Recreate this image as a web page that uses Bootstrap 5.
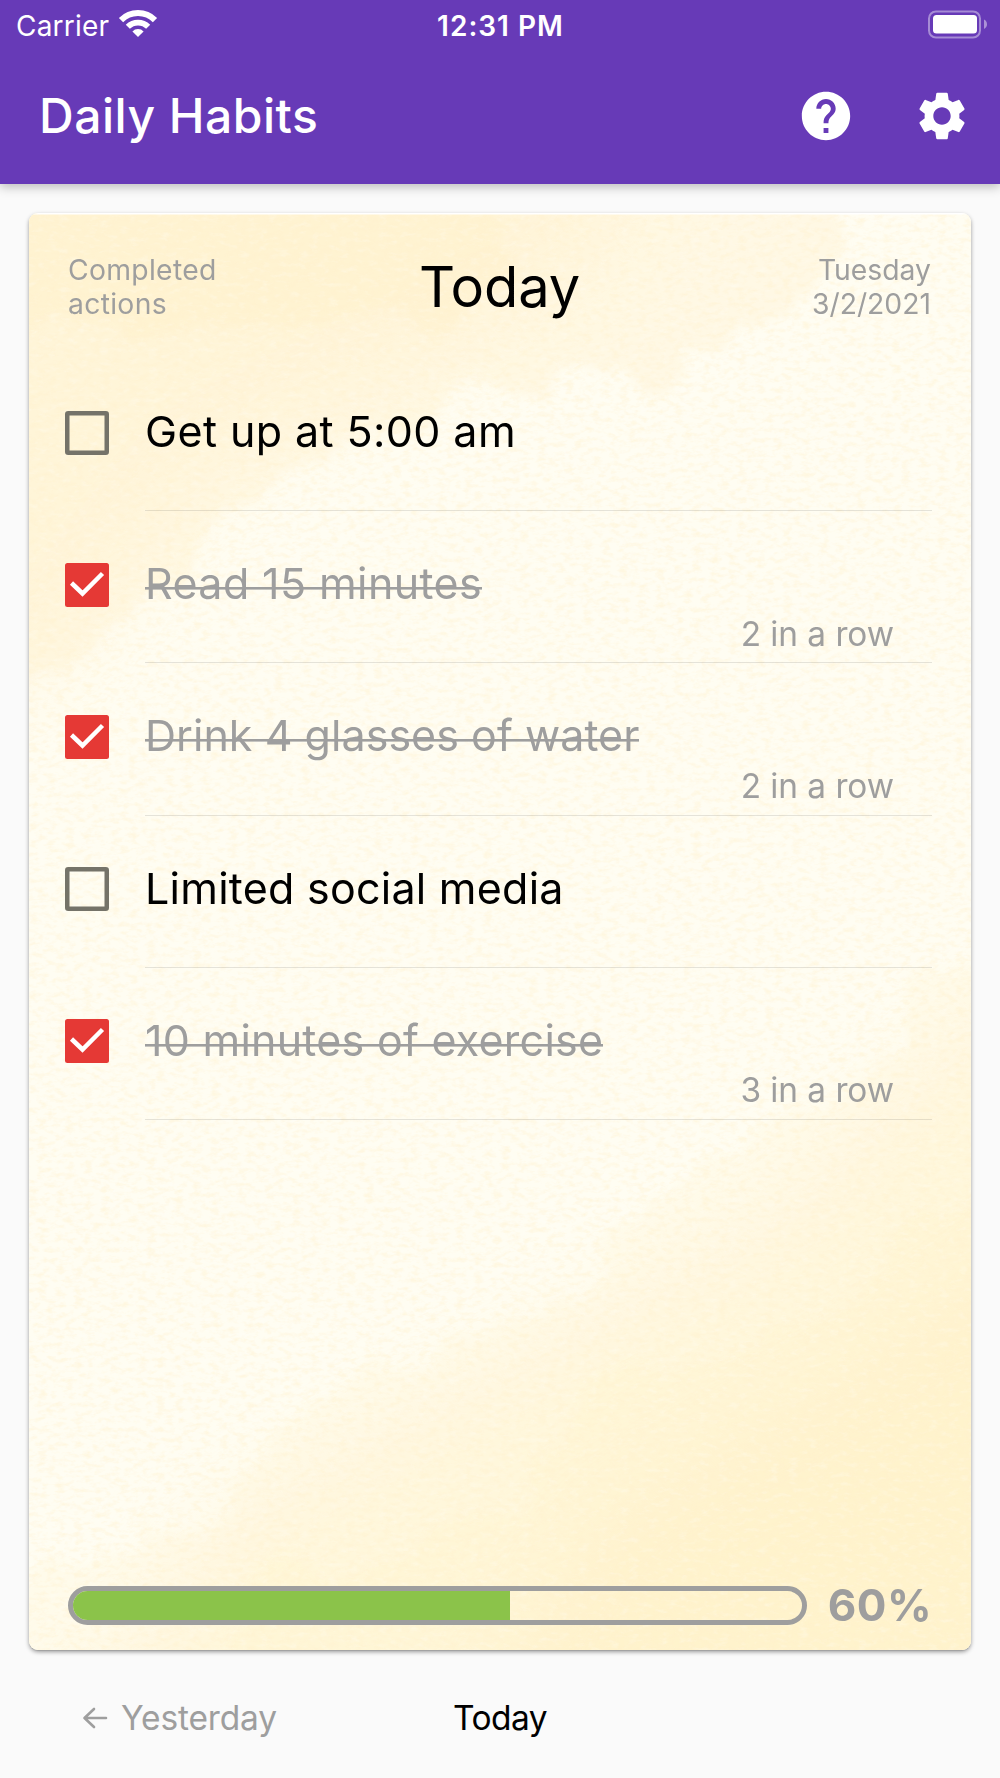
<!DOCTYPE html>
<html lang="en">
<head>
<meta charset="utf-8">
<meta name="viewport" content="width=device-width, initial-scale=1">
<title>Daily Habits</title>
<link href="https://cdn.jsdelivr.net/npm/bootstrap@5.3.0/dist/css/bootstrap.min.css" rel="stylesheet">
<style>
  body { font-family: Inter, "Liberation Sans", sans-serif; background: #fafafa; color: #000; }
  .screen { width: 1000px; height: 1778px; overflow: hidden; }
  .app-head { height: 184px; background: #673ab7; box-shadow: 0 3px 10px rgba(0,0,0,.25); z-index: 1; }
  .status-bar { height: 48px; padding: 3px 13px 0 16px; font-size: 28px; line-height: 46px; }
  .status-side { flex: 1 1 0; }
  .status-icon { margin-top: 6px; }
  .wifi { margin-left: 8px; }
  .carrier { letter-spacing: .2px; }
  .clock { letter-spacing: 1px; font-weight: 600; margin-right: 2px; }
  .title-bar { height: 136px; padding: 0 29px 0 39px; }
  .app-title { font-size: 48px; font-weight: 500; line-height: 60px; letter-spacing: .5px; }
  .actions { gap: 58px; }
  .paper { margin: 29px 29px 0; height: 1437px; border-radius: 9px; background: #fffcf0; border: 0;
    box-shadow: 0 2px 4px rgba(0,0,0,.38), 0 1px 1px rgba(0,0,0,.1); overflow: hidden; }
  .paper-content { position: relative; }
  .day-head { height: 146px; padding: 39.5px 40px 0 39px; color: #9e9e9e; font-size: 28.3px; line-height: 34px; }
  .day-side { flex: 1 1 0; }
  .day-side.first { letter-spacing: .3px; }
  .day-title { font-size: 56px; line-height: 69px; color: #000; font-weight: 400; letter-spacing: -.1px; }
  .habit { height: 152.2px; padding-left: 36px; padding-right: 39px; }
  .tick { width: 44px; height: 44px; margin: 51.6px 36px 0 0; }
  .habit-body { border-bottom: 1px solid rgba(0,0,0,.1); padding-top: 46px; }
  .habit-name { font-size: 43px; line-height: 52px; letter-spacing: .25px; }
  .done .habit-name { color: #9e9e9e; background: linear-gradient(#9e9e9e, #9e9e9e) 0 30px / 100% 2.6px no-repeat; width: fit-content; }
  .habit-name.ls-wide { letter-spacing: .4px; }
  .habit-name.ls-tight { letter-spacing: .04px; }
  .streak { font-size: 33.4px; line-height: 40px; color: #9e9e9e; margin-top: 4.5px; padding-right: 38px; letter-spacing: -.05px; }
  .meter-row { padding: 0 39px 25px 39px; }
  .meter { width: 739px; height: 39px; border: 5px solid #9e9e9e; border-radius: 20px; background: transparent; }
  .meter .progress-bar { background: #8bc34a; }
  .percent { font-size: 44px; font-weight: 700; line-height: 39px; letter-spacing: .4px; color: #9e9e9e; }
  .pager { height: 128px; padding: 48px 82px 0; font-size: 33.5px; line-height: 40px; letter-spacing: -.15px; }
  .pager-side { flex: 1 1 0; color: #9e9e9e; }
  .pager-now { letter-spacing: -.5px; }
  .pager-arrow { margin: 8px 13px 0 0; }
</style>
</head>
<body>
<div class="screen d-flex flex-column">
  <header class="app-head position-relative text-white">
    <div class="status-bar d-flex align-items-start">
      <div class="status-side d-flex">
        <span class="carrier">Carrier</span>
        <svg class="status-icon wifi" width="42" height="30" viewBox="0 0 42 30" fill="none" stroke="#fff">
          <path d="M4.03 11.03A24 24 0 0 1 37.97 11.03" stroke-width="6"/>
          <path d="M10.82 17.82A14.4 14.4 0 0 1 31.18 17.82" stroke-width="5.8"/>
          <path d="M21 28L15.4 22.4A8 8 0 0 1 26.6 22.4Z" fill="#fff" stroke="none"/>
        </svg>
      </div>
      <div class="clock">12:31 PM</div>
      <div class="status-side d-flex justify-content-end">
        <svg class="status-icon" width="60" height="32" viewBox="0 0 60 32">
          <rect x="2" y="2.5" width="51" height="26" rx="7" fill="none" stroke="#fff" stroke-opacity=".42" stroke-width="2"/>
          <rect x="6" y="6" width="44" height="18.5" rx="3.5" fill="#fff"/>
          <path d="M57 10.5Q60 12 60 15.3Q60 18.5 57 20Z" fill="#fff" fill-opacity=".45"/>
        </svg>
      </div>
    </div>
    <div class="title-bar d-flex align-items-center justify-content-between">
      <h1 class="app-title m-0">Daily Habits</h1>
      <div class="actions d-flex">
        <svg width="58" height="58" viewBox="0 0 24 24" fill="#fff"><path d="M12 2C6.48 2 2 6.48 2 12s4.48 10 10 10 10-4.48 10-10S17.52 2 12 2zm1 17h-2v-2h2v2zm2.07-7.75l-.9.92C13.45 12.9 13 13.5 13 15h-2v-.5c0-1.1.45-2.1 1.17-2.83l1.24-1.26c.37-.36.59-.86.59-1.41 0-1.1-.9-2-2-2s-2 .9-2 2H8c0-2.21 1.79-4 4-4s4 1.79 4 4c0 .88-.36 1.68-.93 2.25z"/></svg>
        <svg width="58" height="58" viewBox="0 0 24 24" fill="#fff"><path d="M19.14,12.94c0.04-0.3,0.06-0.61,0.06-0.94c0-0.32-0.02-0.64-0.07-0.94l2.03-1.58c0.18-0.14,0.23-0.41,0.12-0.61l-1.92-3.32c-0.12-0.22-0.37-0.29-0.59-0.22l-2.39,0.96c-0.5-0.38-1.03-0.7-1.62-0.94L14.4,2.81c-0.04-0.24-0.24-0.41-0.48-0.41h-3.84c-0.24,0-0.43,0.17-0.47,0.41L9.25,5.35C8.66,5.59,8.12,5.92,7.63,6.29L5.24,5.33c-0.22-0.08-0.47,0-0.59,0.22L2.74,8.87C2.62,9.08,2.66,9.34,2.86,9.48l2.03,1.58C4.84,11.36,4.8,11.69,4.8,12s0.02,0.64,0.07,0.94l-2.03,1.58c-0.18,0.14-0.23,0.41-0.12,0.61l1.92,3.32c0.12,0.22,0.37,0.29,0.59,0.22l2.39-0.96c0.5,0.38,1.03,0.7,1.62,0.94l0.36,2.54c0.05,0.24,0.24,0.41,0.48,0.41h3.84c0.24,0,0.44-0.17,0.47-0.41l0.36-2.54c0.59-0.24,1.13-0.56,1.62-0.94l2.39,0.96c0.22,0.08,0.47,0,0.59-0.22l1.92-3.32c0.12-0.22,0.07-0.47-0.12-0.61L19.14,12.94z M12,15.6c-1.98,0-3.6-1.62-3.6-3.6s1.62-3.6,3.6-3.6s3.6,1.62,3.6,3.6S13.98,15.6,12,15.6z"/></svg>
      </div>
    </div>
  </header>

  <main class="paper card">
    <!-- watercolour washes and paper grain -->
    <svg class="position-absolute top-0 start-0" width="942" height="1437" viewBox="0 0 942 1437" color-interpolation-filters="sRGB">
      <defs>
        <filter id="wash" x="-20%" y="-20%" width="140%" height="140%">
          <feTurbulence type="fractalNoise" baseFrequency=".014" numOctaves="5" seed="4"/>
          <feDisplacementMap in="SourceGraphic" scale="90" xChannelSelector="R" yChannelSelector="G"/>
          <feGaussianBlur stdDeviation="4"/>
        </filter>
        <filter id="soft" x="-30%" y="-30%" width="160%" height="160%"><feGaussianBlur stdDeviation="45"/></filter>
        <filter id="grain" x="0" y="0" width="100%" height="100%">
          <feTurbulence type="fractalNoise" baseFrequency=".11 .2" numOctaves="3" seed="8"/>
          <feColorMatrix values="0 0 0 0 1  0 0 0 0 .945  0 0 0 0 .81  2.6 0 0 0 -1.15"/>
        </filter>
        <filter id="fleck" x="0" y="0" width="100%" height="100%">
          <feTurbulence type="fractalNoise" baseFrequency=".1 .2" numOctaves="3" seed="31"/>
          <feColorMatrix values="0 0 0 0 1  0 0 0 0 1  0 0 0 0 .98  3 0 0 0 -1.5"/>
        </filter>
      </defs>
      <rect width="942" height="1437" fill="#fffdf2"/>
      <g fill="#ffeec2" filter="url(#soft)">
        <path d="M-100-100H640L560 60L400 150L180 250L80 380L0 480H-100Z" opacity=".35"/>
        <path d="M1040 740L900 850L740 1010L420 1180L200 1300L20 1540H1040Z" opacity=".38"/>
        <path d="M1040 1000L820 1160L580 1300L420 1540H1040Z" opacity=".5"/>
      </g>
      <g fill="#ffeec2" filter="url(#wash)">
        <path d="M-100-100H440L480 60L420 110L200 118L-100 108Z" opacity=".33"/>
        <path d="M-100-100H860L790 70L700 130L600 170L440 180L330 230L210 300L160 380L100 400L-40 500H-100Z" opacity=".3"/>
        <path d="M1040 680L900 760L850 850L600 1010L560 1080L300 1180L180 1300L-100 1400V1540H1040Z" opacity=".14"/>
        <path d="M1040 960L900 1010L800 1110L560 1180L500 1290L380 1340L200 1380V1540H1040Z" opacity=".2"/>
      </g>
      <rect width="942" height="1437" filter="url(#grain)" opacity=".5"/>
      <rect width="942" height="1437" filter="url(#fleck)" opacity=".25"/>
      <rect width="942" height="1.5" fill="#fff"/>
    </svg>

    <div class="paper-content d-flex flex-column h-100">
      <div class="day-head d-flex align-items-start">
        <div class="day-side first">Completed<br>actions</div>
        <h2 class="day-title m-0">Today</h2>
        <div class="day-side text-end">Tuesday<br>3/2/2021</div>
      </div>

      <ul class="list-unstyled m-0 flex-grow-1">
        <li class="habit d-flex">
          <svg class="tick flex-shrink-0" viewBox="0 0 44 44"><rect x="2.25" y="2.25" width="39.5" height="39.5" rx="1" fill="none" stroke="#757369" stroke-width="4.5"/></svg>
          <div class="habit-body flex-grow-1"><div class="habit-name ls-wide">Get up at 5:00 am</div></div>
        </li>
        <li class="habit done d-flex">
          <svg class="tick flex-shrink-0" viewBox="0 0 44 44"><rect width="44" height="44" rx="2.5" fill="#e53935"/><path d="M6.5 20L17.5 30.500L37.5 10.500" fill="none" stroke="#fff" stroke-width="4.5"/></svg>
          <div class="habit-body flex-grow-1"><div class="habit-name ls-wide">Read 15 minutes</div><div class="streak text-end">2 in a row</div></div>
        </li>
        <li class="habit done d-flex">
          <svg class="tick flex-shrink-0" viewBox="0 0 44 44"><rect width="44" height="44" rx="2.5" fill="#e53935"/><path d="M6.5 20L17.5 30.500L37.5 10.500" fill="none" stroke="#fff" stroke-width="4.5"/></svg>
          <div class="habit-body flex-grow-1"><div class="habit-name ls-tight">Drink 4 glasses of water</div><div class="streak text-end">2 in a row</div></div>
        </li>
        <li class="habit d-flex">
          <svg class="tick flex-shrink-0" viewBox="0 0 44 44"><rect x="2.25" y="2.25" width="39.5" height="39.5" rx="1" fill="none" stroke="#757369" stroke-width="4.5"/></svg>
          <div class="habit-body flex-grow-1"><div class="habit-name">Limited social media</div></div>
        </li>
        <li class="habit done d-flex">
          <svg class="tick flex-shrink-0" viewBox="0 0 44 44"><rect width="44" height="44" rx="2.5" fill="#e53935"/><path d="M6.5 20L17.5 30.500L37.5 10.500" fill="none" stroke="#fff" stroke-width="4.5"/></svg>
          <div class="habit-body flex-grow-1"><div class="habit-name">10 minutes of exercise</div><div class="streak text-end">3 in a row</div></div>
        </li>
      </ul>

      <div class="meter-row d-flex align-items-center justify-content-between">
        <div class="meter progress"><div class="progress-bar" style="width:60%"></div></div>
        <div class="percent">60%</div>
      </div>
    </div>
  </main>

  <nav class="pager d-flex align-items-start">
    <div class="pager-side d-flex align-items-start">
      <svg class="pager-arrow" width="26" height="24" viewBox="0 0 26 24" fill="none" stroke="#9e9e9e" stroke-width="2.6" stroke-linecap="round" stroke-linejoin="round"><path d="M24 12H3M12 3L2.5 12L12 21"/></svg>
      <span>Yesterday</span>
    </div>
    <div class="pager-now">Today</div>
    <div class="pager-side"></div>
  </nav>
</div>
<script src="https://cdn.jsdelivr.net/npm/bootstrap@5.3.0/dist/js/bootstrap.bundle.min.js"></script>
</body>
</html>
